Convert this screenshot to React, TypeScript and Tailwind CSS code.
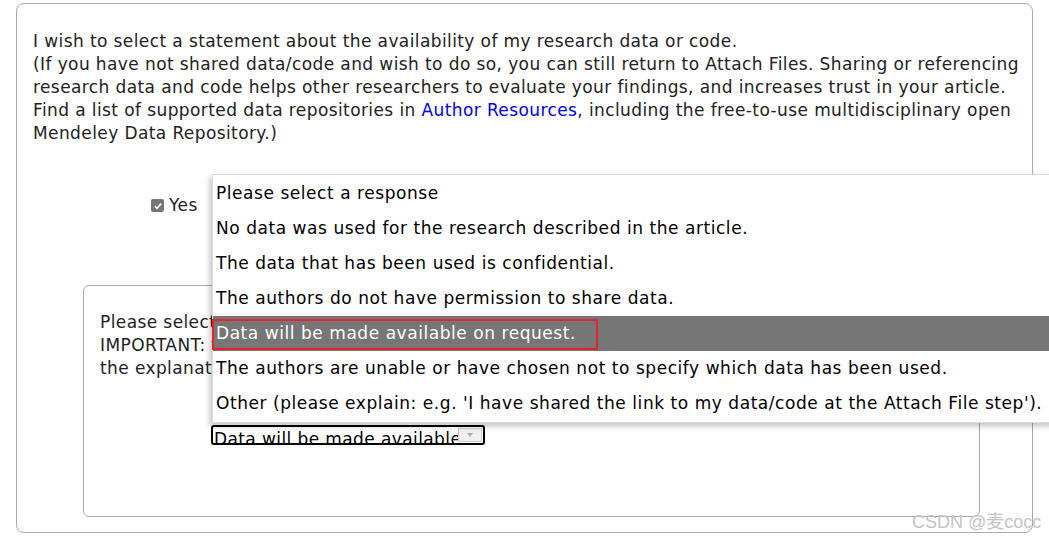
import React from "react";

const options = [
  "Please select a response",
  "No data was used for the research described in the article.",
  "The data that has been used is confidential.",
  "The authors do not have permission to share data.",
  "Data will be made available on request.",
  "The authors are unable or have chosen not to specify which data has been used.",
  "Other (please explain: e.g. 'I have shared the link to my data/code at the Attach File step').",
];

export default function App() {
  const selected = 4;

  return (
    <div
      className="relative w-[1049px] h-[539px] overflow-hidden bg-white text-[#222] text-[17px] tracking-[0.4px]"
      style={{ fontFamily: '"DejaVu Sans", Verdana, sans-serif' }}
    >
      <div className="pt-[3px] pl-4">
        {/* Outer panel */}
        <div className="w-[1017px] h-[530px] rounded-lg border border-[#aaa] pt-[26px] px-4">
          <div className="leading-[23px] whitespace-nowrap">
            <div>I wish to select a statement about the availability of my research data or code.</div>
            <div>
              (If you have not shared data/code and wish to do so, you can still return to Attach Files. Sharing or referencing
            </div>
            <div>research data and code helps other researchers to evaluate your findings, and increases trust in your article.</div>
            <div>
              Find a list of supported data repositories in <a className="text-[#0000ee]">Author Resources</a>, including
              the free-to-use multidisciplinary open
            </div>
            <div>Mendeley Data Repository.)</div>
          </div>

          {/* Yes row */}
          <div className="mt-[49px] ml-[118px] flex items-center gap-[5px] h-[23px]">
            <span className="w-[13px] h-[13px] rounded-[2px] bg-[#767676] flex items-center justify-center">
              <svg viewBox="0 0 12 12" className="w-[10px] h-[10px]">
                <path d="M2.2 6.2 L4.8 8.7 L9.8 3.2" fill="none" stroke="white" strokeWidth="2" />
              </svg>
            </span>
            <span>Yes</span>
          </div>

          {/* Inner panel */}
          <div className="mt-[68px] ml-[50px] w-[897px] h-[232px] rounded-md border border-[#aaa] pt-[25px] pl-4">
            <div className="leading-[23px] whitespace-nowrap">
              <div>Please select the statement that best describes the availability of your research data.</div>
              <div>IMPORTANT: this statement will be published alongside your article. If you select 'Other',</div>
              <div>the explanation you provide will be used as your data statement.</div>
            </div>
            <div className="mt-[45px] ml-[111px] relative w-[274px] h-[20px] rounded-[3px] border-2 border-black overflow-hidden">
              <span className="absolute left-[1px] top-[2px] leading-[20px] whitespace-nowrap text-black">
                Data will be made available
              </span>
              <span className="absolute right-[1px] top-[1px] w-[24px] h-[14px] bg-[#f0f0f0] border border-[#ccc] flex items-center justify-center">
                <span className="w-0 h-0 border-l-[3px] border-r-[3px] border-t-[4px] border-l-transparent border-r-transparent border-t-[#aaa]" />
              </span>
            </div>
          </div>
        </div>
      </div>

      {/* Open list of the select */}
      <div className="absolute left-[212px] top-[174px] w-[860px] bg-white border border-[#ddd] shadow-[-2px_3px_6px_rgba(0,0,0,0.25)] py-[1px] tracking-[0.55px]">
        {options.map((o, i) => (
          <div
            key={o}
            className={`relative h-[35px] flex items-center pl-[3px] whitespace-nowrap ${
              i === selected ? "bg-[#767676] text-white" : "text-black"
            }`}
          >
            {o}
            {i === selected && (
              <span className="absolute left-[-1px] top-[3px] w-[386px] h-[31px] border-2 border-[#e8212b]" />
            )}
          </div>
        ))}
      </div>

      {/* Watermark */}
      <div
        className="absolute left-[912px] top-[509px] text-[18px] tracking-normal text-[#c4c4c4] whitespace-nowrap"
        style={{ fontFamily: '"Liberation Sans", "Noto Sans CJK SC", sans-serif' }}
      >
        CSDN @麦cocc
      </div>
    </div>
  );
}
